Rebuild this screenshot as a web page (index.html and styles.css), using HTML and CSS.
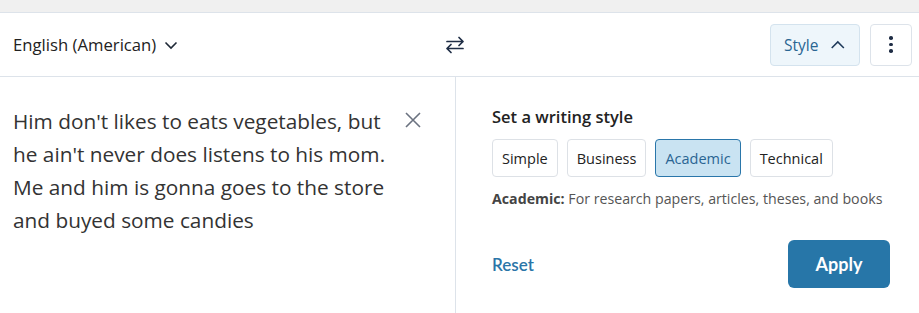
FILE: index.html
```html
<!DOCTYPE html>
<html lang="en">
<head>
  <meta charset="UTF-8" />
  <title>Writing style</title>
  <link rel="stylesheet" href="styles.css">
</head>
<body>

  <div class="top-strip"></div>

  <!-- header bar -->
  <header class="toolbar">
    <div class="lang">
      English (American)
      <svg class="chev" width="14" height="14" viewBox="0 0 14 14"><path d="M1.5 4.5 L7 10 L12.5 4.5" fill="none" stroke="#1f2937" stroke-width="1.6"/></svg>
    </div>

    <div class="swap">
      <svg width="22" height="22" viewBox="0 0 22 22" fill="none" stroke="#1f2d45" stroke-width="1.7" stroke-linecap="round" stroke-linejoin="round">
        <path d="M3 7.5 H19 M15 3.5 L19 7.5 L15 11.5"/>
        <path d="M19 14.5 H3 M7 10.5 L3 14.5 L7 18.5"/>
      </svg>
    </div>

    <div class="tools">
      <button class="style-btn">
        Style
        <svg width="18" height="18" viewBox="0 0 18 18"><path d="M2 12.5 L9 5.5 L16 12.5" fill="none" stroke="#1f3a5a" stroke-width="1.8"/></svg>
      </button>
      <button class="more-btn">
        <span></span><span></span><span></span>
      </button>
    </div>
  </header>

  <main class="panes">
    <section class="input-pane">
      <p class="sample">Him don't likes to eats vegetables, but he ain't never does listens to his mom. Me and him is gonna goes to the store and buyed some candies</p>
      <svg class="clear" width="18" height="18" viewBox="0 0 18 18"><path d="M2 2 L16 16 M16 2 L2 16" stroke="#6b7280" stroke-width="1.6"/></svg>
    </section>

    <section class="style-pane">
      <h2>Set a writing style</h2>
      <div class="chips">
        <button class="chip">Simple</button>
        <button class="chip">Business</button>
        <button class="chip active">Academic</button>
        <button class="chip">Technical</button>
      </div>
      <p class="desc"><b>Academic:</b> For research papers, articles, theses, and books</p>

      <div class="actions">
        <a href="#" class="reset">Reset</a>
        <button class="apply">Apply</button>
      </div>
    </section>
  </main>

</body>
</html>
```

FILE: styles.css
```css
* {
  margin: 0;
  padding: 0;
  box-sizing: border-box;
}

body {
  font-family: "Open Sans", "Noto Sans", sans-serif;
  background-color: #ffffff;
  color: #2b2b2b;
  width: 919px;
  height: 313px;
  overflow: hidden;
}

.top-strip {
  height: 13px;
  background-color: #f0f0f0;
  border-bottom: 1px solid #dde3ea;
}

.toolbar {
  display: flex;
  align-items: center;
  height: 64px;
  padding: 0 7px 0 13px;
  border-bottom: 1px solid #dde3ea;
}

.lang {
  display: flex;
  align-items: center;
  gap: 8px;
  font-size: 16.7px;
  color: #222;
  width: 431px;
}

.swap {
  display: flex;
}

.tools {
  flex: 1;
  display: flex;
  justify-content: flex-end;
  gap: 10px;
}

.style-btn {
  display: flex;
  align-items: center;
  gap: 12px;
  height: 42px;
  width: 90px;
  padding: 0 13px;
  background-color: #eef6fb;
  border: 1px solid #d4e3ee;
  border-radius: 4px;
  font-family: inherit;
  font-size: 15.5px;
  color: #2a6592;
}

.more-btn {
  display: flex;
  flex-direction: column;
  align-items: center;
  justify-content: center;
  gap: 3px;
  width: 42px;
  height: 42px;
  background-color: #fff;
  border: 1px solid #dde3ea;
  border-radius: 4px;
}

.more-btn span {
  width: 3.5px;
  height: 3.5px;
  border-radius: 50%;
  background-color: #1f2d45;
}

.panes {
  display: flex;
  height: 236px;
}

.input-pane {
  display: flex;
  align-items: flex-start;
  justify-content: space-between;
  width: 456px;
  padding: 28px 33px 0 13px;
  border-right: 1px solid #dde3ea;
}

.sample {
  width: 385px;
  font-size: 20.8px;
  line-height: 33px;
  color: #333;
}

.clear {
  margin-top: 6px;
}

.style-pane {
  flex: 1;
  padding: 29px 29px 0 36px;
}

.style-pane h2 {
  font-size: 16.5px;
  font-weight: 600;
  color: #222;
  line-height: 22px;
}

.chips {
  display: flex;
  gap: 9px;
  margin-top: 11px;
}

.chip {
  height: 38px;
  padding: 0 9px;
  background-color: #fff;
  border: 1px solid #dde1e6;
  border-radius: 4px;
  font-family: inherit;
  font-size: 14.5px;
  color: #222;
}

.chip.active {
  background-color: #c9e3f2;
  border-color: #2a76aa;
  color: #2a6592;
}

.desc {
  margin-top: 12px;
  font-size: 14.2px;
  color: #555;
}

.desc b {
  color: #444;
}

.actions {
  display: flex;
  align-items: center;
  justify-content: space-between;
  margin-top: 32px;
}

.reset {
  font-family: "Lato", sans-serif;
  font-size: 17px;
  font-weight: 600;
  color: #2a75a8;
  text-decoration: none;
}

.apply {
  width: 102px;
  height: 48px;
  background-color: #2776a8;
  border: none;
  border-radius: 6px;
  font-family: "Lato", sans-serif;
  font-size: 18px;
  font-weight: 700;
  color: #fff;
}
```
